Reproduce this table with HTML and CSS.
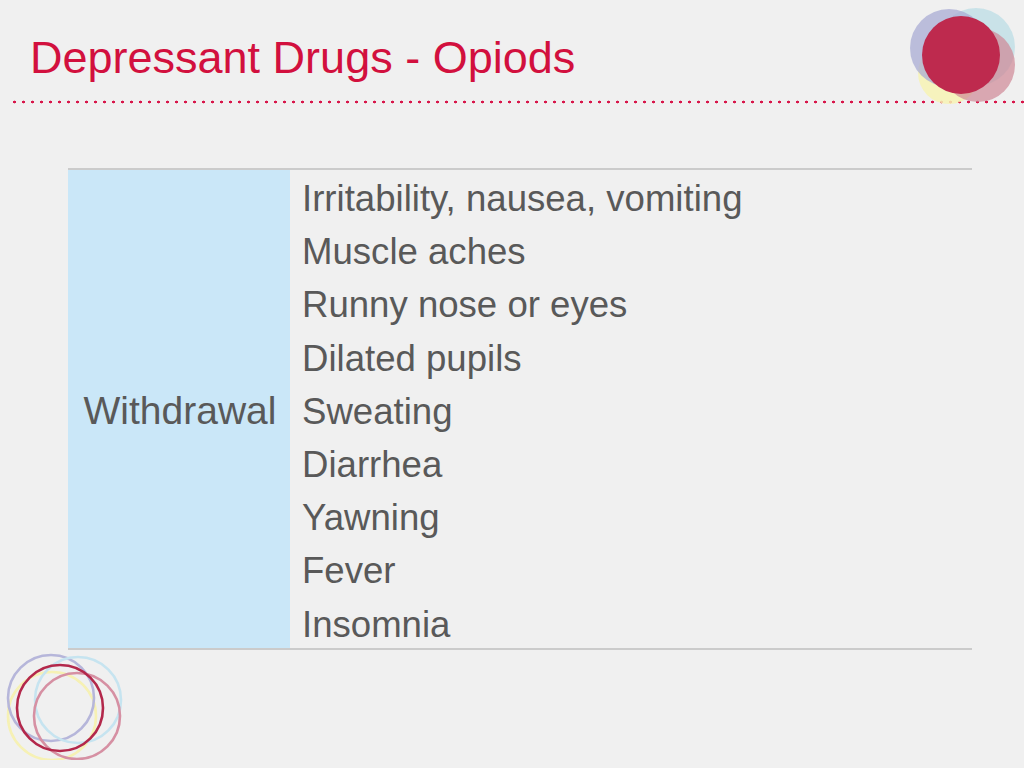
FILE: index.html
```html
<!DOCTYPE html>
<html lang="en">
<head>
<meta charset="utf-8">
<title>Depressant Drugs - Opiods</title>
<link rel="stylesheet" href="styles.css">
</head>
<body>
<div class="slide">
  <header class="head">
    <h1 class="title">Depressant Drugs - Opiods</h1>
  </header>
  <div class="rule"></div>
  <svg class="logo" width="120" height="110" viewBox="0 0 120 110" aria-hidden="true">
    <circle cx="45" cy="73" r="31" fill="#f7f3b4" opacity="0.85"/>
    <circle cx="72" cy="47" r="39" fill="#bcdde6" opacity="0.75"/>
    <circle cx="74" cy="65" r="37" fill="#cf8796" opacity="0.7"/>
    <circle cx="45" cy="48" r="39" fill="#aaacd4" opacity="0.75"/>
    <circle cx="57" cy="55" r="39" fill="#be2a4e"/>
  </svg>
  <main class="content">
    <div class="table">
      <div class="cell-head">Withdrawal</div>
      <ul class="cell-list">
        <li>Irritability, nausea, vomiting</li>
        <li>Muscle aches</li>
        <li>Runny nose or eyes</li>
        <li>Dilated pupils</li>
        <li>Sweating</li>
        <li>Diarrhea</li>
        <li>Yawning</li>
        <li>Fever</li>
        <li>Insomnia</li>
      </ul>
    </div>
  </main>
  <svg class="rings" width="130" height="120" viewBox="0 0 130 120" aria-hidden="true">
    <g fill="none" stroke-width="2.6">
      <circle cx="52" cy="76" r="44" stroke="#f6f1b4"/>
      <circle cx="51" cy="58" r="43" stroke="#b6b6da"/>
      <circle cx="78" cy="60" r="43" stroke="#c6e4f0"/>
      <circle cx="77" cy="76" r="43" stroke="#d690a3"/>
      <circle cx="60" cy="68" r="43" stroke="#b3284b"/>
    </g>
  </svg>
</div>
</body>
</html>
```

FILE: styles.css
```css
html, body {
  margin: 0;
  padding: 0;
  background: #f0f0f0;
}

.slide {
  position: relative;
  width: 1024px;
  height: 768px;
  overflow: hidden;
  background: #f0f0f0;
  font-family: "Liberation Sans", Arial, sans-serif;
}

.head {
  padding: 35px 0 0 30px;
}

.title {
  margin: 0;
  font-weight: normal;
  font-size: 45px;
  line-height: 45px;
  color: #d2103e;
}

.rule {
  margin: 20px 0 0 10px;
  height: 4px;
  background-image: radial-gradient(circle, #d8164a 1.3px, transparent 1.6px);
  background-size: 9px 4px;
  background-repeat: repeat-x;
  background-position: 0 0;
}

.logo {
  position: absolute;
  top: 0;
  left: 904px;
}

.content {
  padding: 64px 52px 0 68px;
}

.table {
  display: grid;
  grid-template-columns: 222px 1fr;
  border-top: 2px solid #cbcbcb;
  border-bottom: 2px solid #cbcbcb;
  color: #595959;
}

.cell-head {
  background: #cae7f8;
  display: flex;
  align-items: center;
  justify-content: center;
  padding: 4px 0 0 2px;
  font-size: 39px;
}

.cell-list {
  list-style: none;
  margin: 0 0 -3px 0;
  padding: 2px 0 0 12px;
  font-size: 36.6px;
}

.cell-list li {
  line-height: 53.2px;
}

.rings {
  position: absolute;
  left: 0;
  top: 640px;
}
```
